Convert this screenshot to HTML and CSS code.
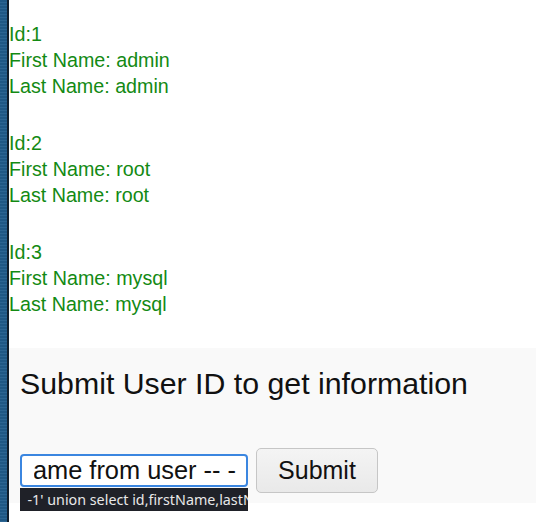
FILE: index.html
```html
<!DOCTYPE html>
<html lang="en">
<head>
<meta charset="utf-8">
<title>User lookup</title>
<link rel="stylesheet" href="styles.css">
</head>
<body>
<div class="page">
  <aside class="sidebar"></aside>
  <main class="main">
    <div class="results">
      <div class="record">
        <div>Id:1</div>
        <div>First Name: admin</div>
        <div>Last Name: admin</div>
      </div>
      <div class="record">
        <div>Id:2</div>
        <div>First Name: root</div>
        <div>Last Name: root</div>
      </div>
      <div class="record">
        <div>Id:3</div>
        <div>First Name: mysql</div>
        <div>Last Name: mysql</div>
      </div>
    </div>
    <section class="form-panel">
      <h2 class="form-title">Submit User ID to get information</h2>
      <form class="form-row" onsubmit="return false">
        <div class="field">
          <input class="id-input" type="text" name="id" value="-1' union select id,firstName,lastName from user -- -">
          <div class="suggest">-1' union select id,firstName,lastName from user -- -</div>
        </div>
        <button class="submit-btn" type="button">Submit</button>
      </form>
    </section>
  </main>
</div>
<script src="script.js"></script>
</body>
</html>
```

FILE: styles.css
```css
html, body {
  margin: 0;
  padding: 0;
  background: #ffffff;
}

.page {
  display: flex;
  min-height: 100vh;
}

.sidebar {
  flex: none;
  width: 7px;
  background-color: #215d8c;
  background-image: repeating-linear-gradient(0deg, rgba(255,255,255,0.05) 0 1px, rgba(0,0,0,0.05) 1px 3px);
  border-right: 2px solid #0f1d2b;
}

.main {
  flex: 1;
  min-width: 0;
}

.results {
  padding-top: 21px;
  font-family: "Liberation Sans", Arial, sans-serif;
  font-size: 19.7px;
  line-height: 26px;
  color: #138a13;
}

.record {
  margin-bottom: 31px;
}

.form-panel {
  background: #f9f9f9;
  padding: 19.4px 11px 10px;
}

.form-title {
  margin: 0 0 46px;
  font-family: "Liberation Sans", Arial, sans-serif;
  font-size: 30.3px;
  font-weight: normal;
  line-height: 34.5px;
  color: #111111;
}

.form-row {
  display: flex;
  align-items: center;
  gap: 8.6px;
  margin: 0;
}

.field {
  position: relative;
}

.id-input {
  display: block;
  box-sizing: border-box;
  width: 227.7px;
  height: 33.4px;
  border: 2px solid #3b86e0;
  border-radius: 4px;
  padding: 0 9px 0 11.5px;
  background: #ffffff;
  font-family: "Liberation Sans", Arial, sans-serif;
  font-size: 25.4px;
  color: #111111;
  outline: none;
}

.suggest {
  position: absolute;
  left: 0;
  top: 34px;
  box-sizing: border-box;
  width: 100%;
  height: 23px;
  padding-left: 7.5px;
  background: #1f2128;
  color: #e8e8e8;
  font-family: "Noto Sans", "Open Sans", sans-serif;
  font-size: 14.3px;
  line-height: 23px;
  white-space: nowrap;
  overflow: hidden;
}

.submit-btn {
  box-sizing: border-box;
  width: 121.4px;
  height: 44.7px;
  padding: 0;
  border: 1px solid #c6c6c6;
  border-radius: 5px;
  background: linear-gradient(#f4f4f4, #e9e9e9);
  font-family: "Liberation Sans", Arial, sans-serif;
  font-size: 25px;
  color: #111111;
}
```

FILE: script.js
```js
var input = document.querySelector('.id-input');
if (input) {
  input.scrollLeft = input.scrollWidth;
}
```
